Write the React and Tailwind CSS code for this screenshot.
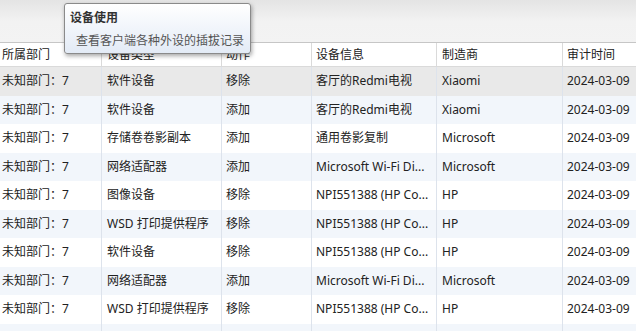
const COLS = [
  { key: 'dept', label: '所属部门', w: 'w-[102px]', pad: 'pl-[2px]' },
  { key: 'type', label: '设备类型', w: 'w-[120px]', pad: 'pl-[5px]' },
  { key: 'action', label: '动作', w: 'w-[90px]', pad: 'pl-[4px]' },
  { key: 'info', label: '设备信息', w: 'w-[125px]', pad: 'pl-[4px]' },
  { key: 'maker', label: '制造商', w: 'w-[126px]', pad: 'pl-[5px]' },
  { key: 'time', label: '审计时间', w: 'flex-1', pad: 'pl-[4px]' },
]

const ROWS = [
  ['未知部门：7', '软件设备', '移除', '客厅的Redmi电视', 'Xiaomi', '2024-03-09'],
  ['未知部门：7', '软件设备', '添加', '客厅的Redmi电视', 'Xiaomi', '2024-03-09'],
  ['未知部门：7', '存储卷卷影副本', '添加', '通用卷影复制', 'Microsoft', '2024-03-09'],
  ['未知部门：7', '网络适配器', '添加', 'Microsoft Wi-Fi Di...', 'Microsoft', '2024-03-09'],
  ['未知部门：7', '图像设备', '移除', 'NPI551388 (HP Co...', 'HP', '2024-03-09'],
  ['未知部门：7', 'WSD 打印提供程序', '移除', 'NPI551388 (HP Co...', 'HP', '2024-03-09'],
  ['未知部门：7', '软件设备', '移除', 'NPI551388 (HP Co...', 'HP', '2024-03-09'],
  ['未知部门：7', '网络适配器', '添加', 'Microsoft Wi-Fi Di...', 'Microsoft', '2024-03-09'],
  ['未知部门：7', 'WSD 打印提供程序', '移除', 'NPI551388 (HP Co...', 'HP', '2024-03-09'],
  ['', '', '', '', '', ''],
]

function rowBg(i) {
  if (i === 0) return 'bg-[#e9e9e9]'
  return i % 2 === 1 ? 'bg-[#f2f6fb]' : 'bg-white'
}

export default function App() {
  return (
    <div
      className="relative w-[636px] h-[331px] overflow-hidden bg-white text-[12px] text-[#222]"
      style={{ fontFamily: '"Noto Sans", "Noto Sans CJK SC", sans-serif' }}
    >
      {/* toolbar band */}
      <div className="h-[43px] bg-gradient-to-b from-[#e4e4e4] via-[#f2f2f2] to-[#f3f3f3] border-b border-[#c6c6c6]" />

      {/* header */}
      <div className="flex h-[24px] bg-white border-b border-[#dadada]">
        {COLS.map((c, i) => (
          <div
            key={c.key}
            className={`${c.w} ${c.pad} shrink-0 flex items-center whitespace-nowrap overflow-hidden ${
              i < COLS.length - 1 ? 'border-r border-[#dadada]' : ''
            }`}
          >
            {c.label}
          </div>
        ))}
      </div>

      {/* body */}
      {ROWS.map((r, ri) => (
        <div key={ri} className={`flex h-[28.5px] ${rowBg(ri)}`}>
          {COLS.map((c, ci) => (
            <div
              key={c.key}
              className={`${c.w} ${c.pad} shrink-0 flex items-center whitespace-nowrap overflow-hidden ${
                ci < COLS.length - 1 ? 'border-r border-[#dde3ec]' : ''
              }`}
            >
              {r[ci]}
            </div>
          ))}
        </div>
      ))}

      {/* tooltip */}
      <div className="absolute left-[64px] top-[3px] w-[187px] h-[51px] rounded-[3px] border border-[#8a8a8a] bg-gradient-to-b from-white to-[#e3ebf6] shadow-[1px_2px_4px_rgba(0,0,0,0.35)] px-[5px] pt-[5px]">
        <div className="font-bold text-[#333] leading-[18px]">设备使用</div>
        <div className="mt-[6px] pl-[6px] text-[#555] leading-[16px] whitespace-nowrap">
          查看客户端各种外设的插拔记录
        </div>
      </div>
    </div>
  )
}
